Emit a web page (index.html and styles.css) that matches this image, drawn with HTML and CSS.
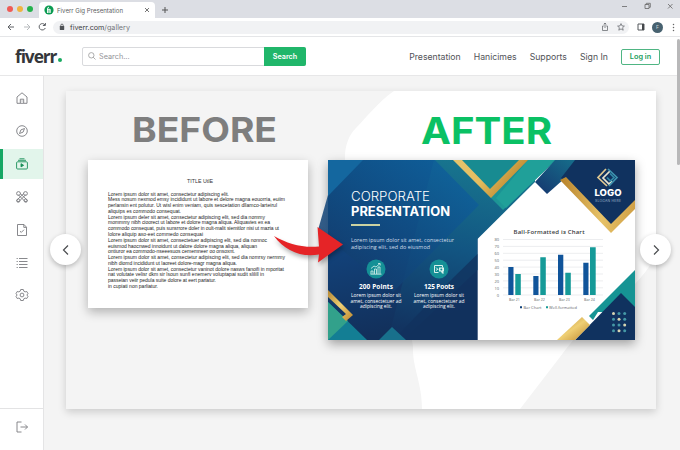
FILE: index.html
```html
<!DOCTYPE html>
<html lang="en">
<head>
<meta charset="utf-8">
<title>Fiverr Gig Presentation</title>
<link rel="stylesheet" href="styles.css">
</head>
<body>
<div class="browser">
  <div class="tabstrip">
    <div class="lights"><i class="red"></i><i class="amber"></i><i class="green"></i></div>
    <div class="tab">
      <svg class="favicon" viewBox="0 0 10 10"><circle cx="5" cy="5" r="4.6" fill="#0b9b52"/><path d="M3.6 8V3.2q.2-1 1.3-.9M3 4.3h3.2v3.6M5 5v3" stroke="#fff" fill="none"/></svg>
      <span class="tab-title">Fiverr Gig Presentation</span>
      <svg class="tab-x" viewBox="0 0 8 8"><path d="M2 2l4 4M6 2L2 6" stroke="#666" stroke-width=".9"/></svg>
    </div>
    <svg class="plus" viewBox="0 0 8 8"><path d="M4 1v6M1 4h6" stroke="#555"/></svg>
    <svg class="winctl" viewBox="0 0 54 10" fill="none" stroke="#666" stroke-width=".8"><path d="M1 5.5h5M24 3.5h4v4h-4zM25.300 3.500v-1.200h4v4h-1.300M47 3l4.500 4.500M51.500 3L47 7.500"/></svg>
  </div>
  <div class="toolbar">
    <svg class="nav" viewBox="0 0 46 12" fill="none" stroke-width="1"><path d="M7 6H1M4 3L1 6l3 3" stroke="#606367"/><path d="M17 6h6M20 3l3 3-3 3" stroke="#b7babd"/><path d="M38 4a3.200 3.200 0 1 0 .3 3M38.400 2v2.500h-2.500" stroke="#606367"/></svg>
    <div class="url">
      <svg class="lock" viewBox="0 0 6 8"><rect x=".8" y="3" width="4.400" height="4" rx=".4" fill="#505357"/><path d="M1.800 3.200V2.300a1.200 1.200 0 0 1 2.400 0v.9" fill="none" stroke="#505357" stroke-width=".8"/></svg>
      <span class="host">fiverr.com<em>/gallery</em></span>
      <svg class="url-icons" viewBox="0 0 24 10" fill="none" stroke="#6c6f73" stroke-width=".8"><path d="M2.800 4H1.500v4.500h5V4H5.200M4 6V1M2.700 2.300L4 1l1.300 1.300"/><path d="M20 1.600l1 2.300 2.400.2-1.800 1.600.6 2.500L20 6.900l-2.200 1.300.6-2.500-1.800-1.600 2.400-.2z"/></svg>
    </div>
    <svg class="panel-icon" viewBox="0 0 8 8"><path d="M1 1h6v6H1z" fill="none" stroke="#55585c"/><path d="M5 1h2v6H5z" fill="#45484c"/></svg>
    <span class="avatar">F</span>
    <svg class="dots" viewBox="0 0 3 9" fill="#666"><circle cx="1.500" cy="1.500" r=".75"/><circle cx="1.500" cy="4.500" r=".75"/><circle cx="1.500" cy="7.500" r=".75"/></svg>
  </div>
  <div class="page">
    <header class="header">
      <div class="brand">fiverr<b></b></div>
      <div class="search">
        <svg viewBox="0 0 8 8"><path d="M5.200 5.200L7.500 7.500M6 3.300a2.700 2.700 0 1 1-5.400 0 2.700 2.700 0 0 1 5.400 0z" fill="none" stroke="#999" stroke-width=".8"/></svg>
        <span class="placeholder">Search...</span>
        <span class="search-btn">Search</span>
      </div>
      <nav class="links"><span>Presentation</span><span>Hanicimes</span><span>Supports</span><span>Sign In</span></nav>
      <span class="login">Log in</span>
    </header>
    <div class="body">
      <aside class="side">
        <div class="item"><svg viewBox="0 0 14 14"><path d="M2 6l5-4.200L12 6v6.300H2zM5.300 12V8.200h3.400V12M7 9.500v1"/></svg></div>
        <div class="item"><svg viewBox="0 0 14 14"><circle cx="7" cy="7" r="5.300"/><path d="M9.500 4.500L8.100 8.100 4.500 9.500l1.400-3.600z"/></svg></div>
        <div class="item active"><svg viewBox="0 0 14 14"><rect x="1.600" y="4.800" width="10.800" height="7.200" rx="1"/><path d="M3 3.300h8M4.500 1.800h5"/><path d="M6 6.700v3.200l2.600-1.600z" fill="#178f57"/></svg></div>
        <div class="item"><svg viewBox="0 0 14 14"><path d="M3.200 4.800L10 11.400q1.400.9 2-.2t-.8-2L5 3.300M10.800 4.700L4 11.400q-1.400.9-2-.2t.8-2L9 3.300"/><circle cx="3.500" cy="3.500" r="1.900"/><circle cx="10.500" cy="3.500" r="1.900"/><circle cx="3.300" cy="10.600" r="1.600"/><circle cx="10.700" cy="10.600" r="1.600"/></svg></div>
        <div class="item"><svg viewBox="0 0 14 14"><path d="M2.500 1.500h6.500l2.500 2.700v8.300h-9zM8.800 1.500v2.900h2.700M5 8.200l1.300 1.200L9 6.700"/></svg></div>
        <div class="item"><svg viewBox="0 0 14 14"><path d="M4 2.500h8.500M4 5.500h8.500M4 8.500h8.500M4 11.500h8.500M1.600 2.500h1.200M1.600 5.500h1.200M1.600 8.500h1.200M1.600 11.500h1.200"/></svg></div>
        <div class="item"><svg viewBox="0 0 14 14"><path d="M5.700 1.500h2.600l.5 1.700 1.300.7 1.700-.4 1.200 2.200L11.800 7l1.200 1.300-1.200 2.200-1.700-.4-1.300.7-.5 1.700H5.700l-.5-1.700-1.300-.7-1.700.4L1 8.300 2.200 7 1 5.700l1.200-2.200 1.700.4 1.300-.7z"/><circle cx="7" cy="7" r="1.900"/></svg></div>
        <div class="exit"><svg viewBox="0 0 14 14"><path d="M6.500 2H2v10h4.500M5.500 7h7M10 4.500L12.500 7 10 9.500"/></svg></div>
      </aside>
      <main class="main">
        <section class="stage">
          <svg class="stage-art" viewBox="0 0 590 318"><path d="M328 0H590V165C560 215 530 216 494 266L454 318H356C356 291 346 276 347 255C340 200 279 125 279 66C279 54 283 44 290 37C300 27 312 11 328 0Z" fill="#fff"/></svg>
          <div class="column">
            <h2 class="word before"><svg viewBox="0 0 144 34"><text x="-1" y="29" textLength="145" lengthAdjust="spacingAndGlyphs">BEFORE</text></svg></h2>
            <article class="doc">
              <h3>TITLE UtlE</h3>
              <svg class="doc-text" viewBox="0 0 182 103">
                <text y="5.500" textLength="121">Lorem ipsum dolor sit amet, consectetur adipiscing elit.</text>
                <text y="11.300" textLength="177">Mess nosum nexmod emsy incididunt ut labore et delore magna eouorria, euiim</text>
                <text y="17.100" textLength="169">perlansin ent polutur. Ut wisl enim veniam, quis sescetation dllamco-larteirul</text>
                <text y="22.900" textLength="73">aliquips es commodo consequat.</text>
                <text y="28.600" textLength="157">Lorem ipsum deler sit amet, consectetur adipiscing elit, sed dia nommy</text>
                <text y="34.400" textLength="162">mommmy nibh cioorect ut labore et dolore magna aliqua. Aliquavies ex ea</text>
                <text y="40.200" textLength="171">commodo consequat, puis sunsrrore doler in oult-malit siemitlor nisi ut mazia ut</text>
                <text y="46" textLength="95">lolore aliquip axo-eet commedo consequai</text>
                <text y="51.700" textLength="159">Lorem ipsum dolor sit amet, consectetuer adipiscing elit, sed dia nonnoc</text>
                <text y="57.500" textLength="149">euismod haocnwed innoidunt ut dalore dolore magna aliqua, aliquan</text>
                <text y="63.300" textLength="127">ontiuror ea commodo-nseeesuos cememneer oo onsoxnt.</text>
                <text y="69.100" textLength="177">Lorem ipsum dolor sit amet, consectetur adipiscing elit, sed dia nomrsy nermmy</text>
                <text y="74.800" textLength="129">nibh diomd incididunt ut laoreet dolore-magr magna aliqua.</text>
                <text y="80.600" textLength="176">Lorem ipsum dolor sit amet, consectetur vaninot dolore nasws fanoifi in mporitat</text>
                <text y="86.400" textLength="156">nat volutate velisr dkm sir lsoun sunfi enemerv voluptapai sudit slilill in</text>
                <text y="92.200" textLength="108">passeian veiir pedula suite dolore at eert pariatur.</text>
                <text y="97.900" textLength="50">in cupiati non parliatur.</text>
              </svg>
            </article>
          </div>
          <div class="column after-col">
            <h2 class="word after"><svg viewBox="0 0 132 34"><text x="0" y="30.500" textLength="131" lengthAdjust="spacingAndGlyphs">AFTER</text></svg></h2>
            <article class="slide">
              <svg class="slide-art" viewBox="0 0 307 180">
                <defs>
                  <linearGradient id="base" x2=".15" y2="1"><stop stop-color="#0f568b"/><stop offset=".5" stop-color="#12427a"/><stop offset="1" stop-color="#12305b"/></linearGradient>
                  <linearGradient id="diamond" x1="1" y1="0" x2="0" y2="1"><stop stop-color="#0e65a2"/><stop offset=".55" stop-color="#104a80"/><stop offset="1" stop-color="#143563"/></linearGradient>
                  <linearGradient id="edge" x1=".6" y1="0" x2=".4" y2="1"><stop stop-color="#18778f"/><stop offset=".5" stop-color="#125582"/><stop offset="1" stop-color="#123360"/></linearGradient>
                  <linearGradient id="gold" x2="1" y2=".4"><stop stop-color="#e5c46e"/><stop offset=".5" stop-color="#e4bd60"/><stop offset="1" stop-color="#b88229"/></linearGradient>
                  <linearGradient id="goldv" x2="1" y2="0"><stop stop-color="#b88229"/><stop offset=".55" stop-color="#e6c268"/><stop offset="1" stop-color="#d0a046"/></linearGradient>
                  <linearGradient id="foil" x2="1" y2="1"><stop stop-color="#b48632"/><stop offset=".5" stop-color="#efcf74"/><stop offset="1" stop-color="#bd872d"/></linearGradient>
                  <linearGradient id="teal" x2="1" y2="1"><stop stop-color="#187f8d"/><stop offset="1" stop-color="#20a39a"/></linearGradient>
                  <linearGradient id="stripe" x1="1" x2="0" y2="1"><stop stop-color="#16708c"/><stop offset="1" stop-color="#15356e"/></linearGradient>
                </defs>
                <rect width="307" height="180" fill="#fff"/>
                <path d="M0 0H149.500V180H0Z" fill="url(#base)"/>
                <path d="M106 0H207V22L149.500 79V110L75 180H60Z" fill="url(#edge)"/>
                <path d="M34 0H107L151 45L65 132L-10 70L0 35Z" fill="url(#diamond)" opacity=".85"/>
                <path d="M125 118L149.500 94V180H65Z" fill="#12325e" opacity=".75"/>
                <path d="M0 0H35L0 36Z" fill="#14679f"/>
                <path d="M130 0H228L175 50L125 0Z" fill="url(#teal)"/>
                <path d="M134 0H192L162 30Z" fill="#188b91"/>
                <path d="M200 0H228L178 48L168 38Z" fill="#20a099"/>
                <path d="M125 0H134L162 29L191 0H200L163 38Z" fill="url(#gold)"/>
                <path d="M227 0H250L236 19L219 34L207 22Z" fill="url(#stripe)"/>
                <path d="M247 0H307V42L283 66L236 20L233 18Z" fill="#10325f"/>
                <path d="M238 17L283 64L307 40V49L283 73L232 20Z" fill="url(#goldv)"/>
                <path d="M307 110V152H270L265 160L261 156Z" fill="#169494"/>
                <path d="M293 133L307 147V180H247Z" fill="#10325f"/>
                <path d="M254 157L262 165L247 180H229Z" fill="url(#foil)"/>
                <path d="M0 142L39 180H0Z" fill="#137e94"/><path d="M0 142L20 161L0 180Z" fill="#32a18b"/>
                <path d="M0 130L25 155L18 161L14 157L18 154L0 137Z" fill="url(#foil)"/>
                <path d="M51 180L64 167L78 180Z" fill="#18708c"/>
                <g fill="#4598a6"><circle cx="285.500" cy="153.500" r="1.500" fill="#d8d5b2"/><circle cx="291" cy="153.500" r="1.500"/><circle cx="296.700" cy="153.500" r="1.500"/><circle cx="285.500" cy="159.300" r="1.500"/><circle cx="291" cy="159.300" r="1.500" fill="#d8d5b2"/><circle cx="296.700" cy="159.300" r="1.500"/><circle cx="285.500" cy="165" r="1.500"/><circle cx="291" cy="165" r="1.500"/><circle cx="296.700" cy="165" r="1.500" fill="#d8d5b2"/><circle cx="285.500" cy="170.700" r="1.500"/><circle cx="291" cy="170.700" r="1.500" fill="#d8d5b2"/><circle cx="296.700" cy="170.700" r="1.500"/></g>
              </svg>
              <div class="pitch">
                <svg class="title" viewBox="0 0 102 29"><text y="12" textLength="79" lengthAdjust="spacingAndGlyphs">CORPORATE</text><text class="strong" y="27" textLength="99" lengthAdjust="spacingAndGlyphs">PRESENTATION</text></svg>
                <i class="rule"></i>
                <svg class="lead" viewBox="0 0 106 14"><text y="4.800" textLength="103">Lorem ipsum dolor sit amet, consectetur</text><text y="11.500" textLength="79">adipiscing elit, sed do eiusmod</text></svg>
                <div class="facts">
                  <div class="fact">
                    <svg class="badge" viewBox="0 0 20 20"><circle cx="10" cy="10" r="9.500" fill="#159096"/><path d="M5 15v-3h2v3M8.500 15v-5h2v5M12 15V8h2v7M4.500 15.200h11M5 9.500l3-2.500 2 1 4-3.500M12 4.500h2.200v2" fill="none" stroke="#d9f2ee" stroke-width=".8"/></svg>
                    <svg class="fact-text" viewBox="0 0 52 26"><text class="strong" x="26" y="5.800" textLength="34">200 Points</text><text x="26" y="13.600" textLength="50">Lorem ipsum dolor sit</text><text x="26" y="19.600" textLength="51">amet, consectetuer ad</text><text x="26" y="25.300" textLength="32">adipiscing elit.</text></svg>
                  </div>
                  <div class="fact">
                    <svg class="badge" viewBox="0 0 20 20"><circle cx="10" cy="10" r="9.500" fill="#159096"/><path d="M5.500 6.500h8v2M5.500 6.500v7h4M7 8.500l2 2M7 11.500l2-1.500" fill="none" stroke="#d9f2ee" stroke-width="1"/><path d="M10 8.500h5v4h-1l1 2h-2l-1-2h-2z" fill="#d9f2ee"/><circle cx="12.300" cy="10.500" r="1" fill="#159096"/></svg>
                    <svg class="fact-text" viewBox="0 0 52 26"><text class="strong" x="26" y="5.800" textLength="30">125 Poots</text><text x="26" y="13.600" textLength="50">Lorem ipsum dolor sit</text><text x="26" y="19.600" textLength="51">amet, consectetuer ad</text><text x="26" y="25.300" textLength="32">adipiscing elit.</text></svg>
                  </div>
                </div>
              </div>
              <div class="figures">
                <svg class="logo" viewBox="0 0 30 36">
                  <g fill="none" stroke-width="1.700"><path d="M13 1L5 9.500L14 18" stroke="#dfc891"/><path d="M17 3L10 10L16 16L19 13" stroke="#e9e4cf"/><path d="M15 1L24 9.500L16 18" stroke="#3f94b0"/><path d="M14 9.500L17.500 13L21 9.500L17 5.500" stroke="#318aa8"/></g>
                  <text class="logo-name" x="15" y="28" textLength="27" lengthAdjust="spacingAndGlyphs">LOGO</text><text class="slogan" x="15" y="33.700" textLength="26">SLOGAN HERE</text>
                </svg>
                <svg class="chart" viewBox="0 0 120 86">
                  <text class="chart-title" x="65" y="8.500" textLength="71">Ball-Formatted iз Chart</text>
                  <path d="M19 14.500H119M19 21.400H119M19 28.300H119M19 35.200H119M19 42.100H119M19 49H119M19 55.900H119M19 62.800H119M19 70H119" stroke="#dfe1e4" stroke-width=".6"/>
                  <g class="axis"><text x="15" y="16.300">80</text><text x="15" y="23.200">70</text><text x="15" y="30.100">60</text><text x="15" y="37">50</text><text x="15" y="43.900">40</text><text x="15" y="50.800">30</text><text x="15" y="57.700">20</text><text x="15" y="64.600">10</text><text x="15" y="71.500">0</text></g>
                  <path fill="#10549a" d="M24.300 42h5.200v28h-5.200zM49.300 51h5.200v19h-5.200zM74 29.700h5.300V70H74zM99.300 37.700h5.200V70h-5.200z"/>
                  <path fill="#159a98" d="M31.300 49h5.500v21h-5.500zM56.300 32.300h5.500V70h-5.500zM81.300 47.700h5.500V70h-5.500zM106 22.300h5.700V70H106z"/>
                  <g class="ticks"><text x="30.500" y="76">Bar 21</text><text x="55.500" y="76">Bar 22</text><text x="80.500" y="76">Bar 23</text><text x="105.500" y="76">Bar 24</text></g>
                  <path d="M36 81.200h2v2h-2z" fill="#10427a"/><path d="M62 81.200h2v2h-2z" fill="#159a98"/>
                  <g class="legend"><text x="39.500" y="83.700" textLength="18">Bar Chart</text><text x="65" y="83.700" textLength="28">Well-formatted</text></g>
                </svg>
              </div>
            </article>
          </div>
          <svg class="arrow" viewBox="0 0 72 40"><path d="M1 5C15 13 29 17 46 15.500L44.500-4L70 13.500L45 31.500L46 23.500C28 27 11 19 1 5Z" fill="#e52427"/></svg>
          <span class="pager prev"><svg viewBox="0 0 12 12"><path d="M8 1.500L3.500 6L8 10.500"/></svg></span>
          <span class="pager next"><svg viewBox="0 0 12 12"><path d="M4 1.500L8.500 6L4 10.500"/></svg></span>
        </section>
      </main>
    </div>
    <i class="scroll"></i>
  </div>
</div>
</body>
</html>
```
FILE: styles.css
```css
* { box-sizing: border-box; }
body { margin: 0; font-family: Inter, "Liberation Sans", sans-serif; background: #f4f4f4; }
svg { display: block; flex: none; overflow: visible; }
h2, h3 { margin: 0; font-weight: 400; }
.browser { width: 680px; height: 450px; overflow: hidden; }
.tabstrip { display: flex; align-items: flex-start; height: 18px; background: #dcdee4; }
.lights { display: flex; gap: 4px; padding: 6px 0 0 7px; width: 39px; }
.lights i { width: 6px; height: 6px; border-radius: 50%; }
.red { background: #ef5b56; }
.amber { background: #f0b440; }
.green { background: #24b24c; }
.tab { display: flex; align-items: center; width: 116px; height: 16px; margin-top: 2px; padding-left: 5px; background: #fff; border-radius: 4px 4px 0 0; }
.favicon { width: 10px; height: 10px; }
.tab-title { width: 88px; margin-left: 3px; color: #5b5d61; font: 6.1px Inter, sans-serif; white-space: nowrap; }
.tab-x { width: 8px; height: 8px; margin-left: -2px; }
.plus { width: 8px; height: 8px; margin: 6px 0 0 6px; }
.winctl { width: 54px; height: 10px; margin: 1px 5px 0 auto; }
.toolbar { display: flex; align-items: center; height: 19px; padding: 0 4px 0 7px; background: #fff; border-bottom: 1px solid #e5e6e8; }
.nav { width: 46px; height: 12px; }
.url { display: flex; align-items: center; width: 576px; height: 13px; padding: 0 4px 0 6px; border-radius: 7px; background: #f1f2f4; }
.lock { width: 6px; height: 8px; }
.host { flex: 1; margin-left: 5px; font-size: 7.2px; color: #3d4044; }
.host em { color: #74777b; font-style: normal; }
.url-icons { width: 24px; height: 10px; margin-right: 0; }
.panel-icon { width: 8px; height: 8px; margin-left: 8px; }
.avatar { width: 11px; height: 11px; margin-left: 7px; border-radius: 50%; background: #486270; color: #cbd7dc; font-size: 5px; line-height: 11px; text-align: center; }
.dots { width: 3px; height: 9px; margin-left: auto; margin-right: 1px; }
.page { position: relative; height: 413px; }
.header { display: flex; align-items: center; height: 39px; padding-left: 15px; background: #fff; border-bottom: 1px solid #e7e7e8; }
.brand { display: flex; align-items: flex-end; width: 67px; color: #34363a; font: 700 17.4px/24px "Open Sans", sans-serif; letter-spacing: -1.1px; }
.brand b { width: 4px; height: 4px; margin: 0 0 6px 1.5px; border-radius: 50%; background: #18aa61; }
.search { display: flex; align-items: center; width: 224px; height: 19px; padding-left: 5px; border: 1px solid #d9dadd; border-radius: 2px; }
.search > svg { width: 8px; height: 8px; }
.placeholder { flex: 1; margin-left: 3px; color: #929397; font-size: 7.3px; }
.search-btn { width: 42px; height: 19px; margin-right: -1px; border-radius: 0 2px 2px 0; background: #20b66a; color: #fff; font: 600 7.2px/19px Inter, sans-serif; text-align: center; }
.links { display: flex; gap: 13px; margin: 2px 0 0 auto; color: #515357; font-size: 8.7px; white-space: nowrap; }
.login { width: 39px; height: 16px; margin: 1px 20px 0 13px; border: 1px solid #4fb583; border-radius: 2px; color: #179c5b; font: 600 7.3px/14px Inter, sans-serif; text-align: center; }
.scroll { position: absolute; top: 2px; right: 0; width: 3px; height: 126px; border-radius: 2px; background: #b8b8b9; }
.body { display: flex; height: 374px; }
.side { display: flex; flex-direction: column; width: 44px; padding-top: 6px; border-right: 1px solid #e4e4e5; background: #fff; }
.item { display: flex; align-items: center; justify-content: center; height: 32.8px; border-left: 0 solid #16a764; }
.side svg { width: 14px; height: 14px; fill: none; stroke: #7a7c80; stroke-width: .9; }
.active { height: 30px; margin: 1px 0 2px; border-left-width: 3px; padding-right: 3px; background: #e2f5eb; }
.side .active svg { stroke: #178f57; }
.exit { display: flex; align-items: center; justify-content: center; height: 42px; margin-top: auto; padding-bottom: 5px; border-top: 1px solid #e3e3e4; }
.main { flex: 1; padding: 15px 0 0 22px; }
.stage { position: relative; display: flex; gap: 20px; width: 590px; height: 318px; padding: 0 21px 0 22px; background: #f4f4f4; box-shadow: 0 3px 8px rgba(0,0,0,.17); }
.stage-art { position: absolute; left: 0; top: 0; width: 590px; height: 318px; }
.column { position: relative; width: 220px; }
.after-col { width: 307px; }
.word { height: 69px; padding-top: 22px; }
.word svg { height: 34px; }
.before svg { width: 144px; margin-left: 45px; }
.after svg { width: 132px; margin-left: 93px; }
.word text { font: 700 34px Inter, sans-serif; }
.before text { fill: #7e7e7e; }
.after text { fill: #0ac164; font-size: 37px; }
.doc { height: 148px; padding: 18px 0 0 20px; background: #fff; box-shadow: 0 4px 10px rgba(0,0,0,.28); }
.doc h3 { width: 184px; color: #333; font: 5.3px/7px "Liberation Sans", sans-serif; text-align: center; }
.doc-text { width: 182px; height: 103px; margin-top: 5px; }
.doc-text text { font: 5px "Liberation Sans", sans-serif; fill: #242424; }
.slide { position: relative; display: flex; height: 180px; box-shadow: 0 4px 10px rgba(0,0,0,.35); }
.slide-art { position: absolute; left: 0; top: 0; width: 307px; height: 180px; }
.pitch { position: relative; width: 149px; padding: 29px 0 0 23px; color: #fff; }
.pitch text { fill: #fff; font-family: "Open Sans", sans-serif; }
.title { width: 102px; height: 29px; }
.title text { font-family: Inter, sans-serif; font-size: 13px; font-weight: 300; }
.title .strong { font-size: 12.5px; font-weight: 700; }
.rule { display: block; width: 29px; height: 1.5px; margin-top: 6px; background: #cbd2a2; }
.lead { width: 106px; height: 14px; margin-top: 11px; }
.lead text { font-size: 5.4px; fill: #d3dfeb; }
.facts { display: flex; gap: 11px; margin: 8px 0 0 -1px; }
.fact { width: 52px; }
.badge { width: 20px; height: 20px; margin: 0 auto; }
.fact-text { width: 52px; height: 26px; margin-top: 4px; }
.fact-text text { font-size: 4.9px; text-anchor: middle; }
.fact-text .strong { font-size: 6.5px; font-weight: 700; }
.figures { position: relative; display: flex; flex-direction: column; width: 158px; padding: 8px 0 0 7px; }
.logo { width: 30px; height: 36px; margin-left: 109px; }
.logo text { fill: #fff; text-anchor: middle; font-family: Inter, sans-serif; }
.logo .logo-name { font-size: 9px; font-weight: 800; }
.logo .slogan { font-size: 3.4px; fill: #9eb3cc; }
.chart { width: 120px; height: 86px; margin-top: 21px; }
.chart text { font-family: "Open Sans", sans-serif; fill: #63666b; font-size: 4px; }
.chart .chart-title { font-size: 6px; font-weight: 600; fill: #3a3c41; text-anchor: middle; }
.axis text { text-anchor: end; }
.chart .ticks text { font-size: 3.6px; text-anchor: middle; }
.arrow { position: absolute; left: 207px; top: 140px; width: 72px; height: 40px; filter: drop-shadow(1px 3px 2px rgba(0,0,0,.3)); }
.pager { position: absolute; top: 143px; display: flex; align-items: center; justify-content: center; width: 31px; height: 31px; border-radius: 50%; background: #fff; box-shadow: 0 2px 5px rgba(0,0,0,.25); }
.pager svg { width: 12px; height: 12px; fill: none; stroke: #4b4d50; stroke-width: 1.2; }
.prev { left: -16px; }
.next { right: -15px; }
```
